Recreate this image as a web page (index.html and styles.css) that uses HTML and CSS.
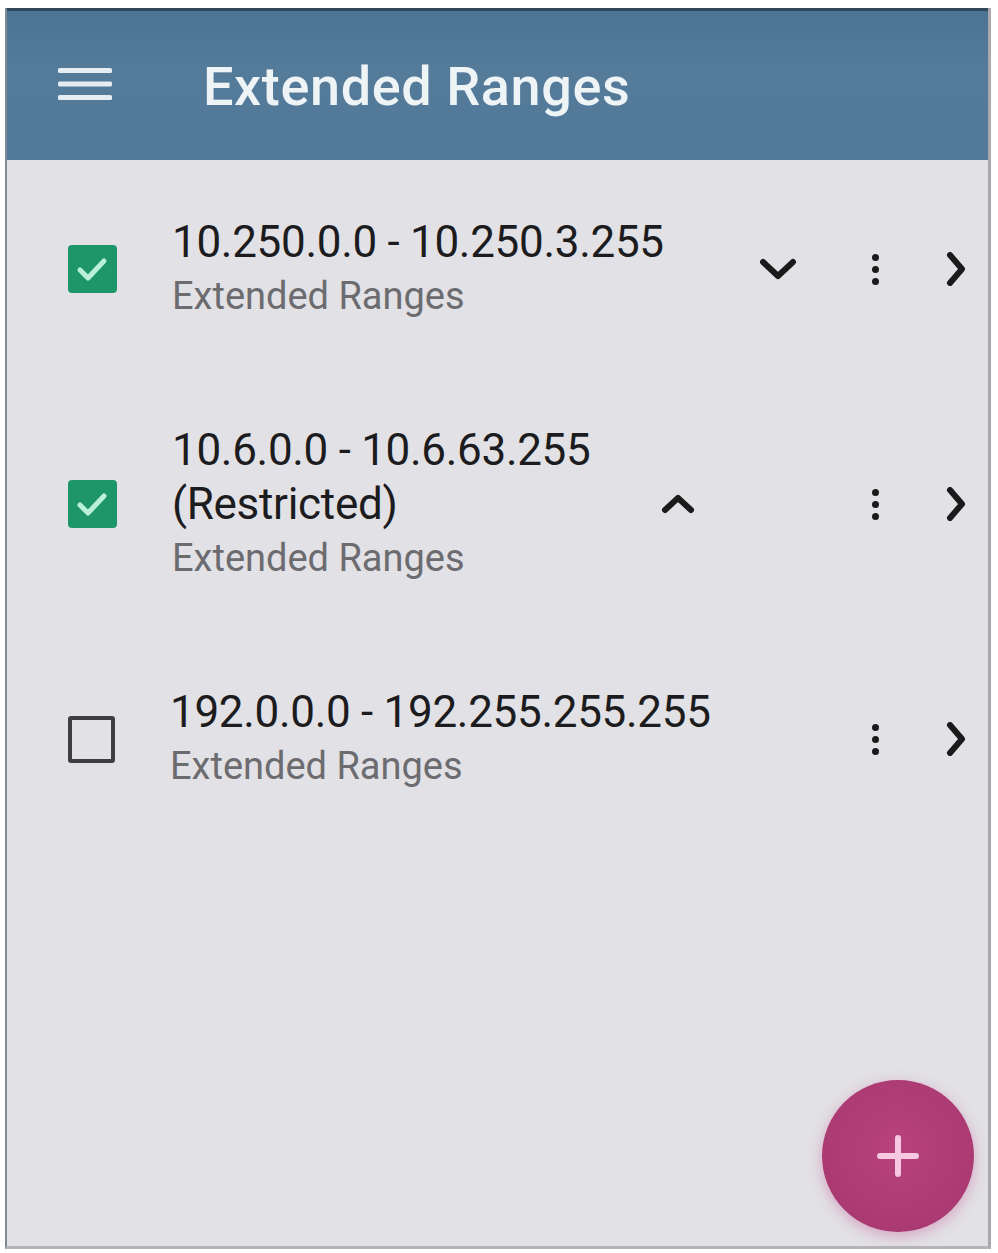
FILE: index.html
```html
<!DOCTYPE html>
<html>
<head>
<meta charset="utf-8">
<link rel="stylesheet" href="styles.css">
</head>
<body>
<div class="frame">
  <header class="appbar">
    <svg class="menu" width="54" height="36" viewBox="0 0 54 36">
      <rect x="0" y="2" width="54" height="5" rx="1.5"/>
      <rect x="0" y="15.5" width="54" height="5" rx="1.5"/>
      <rect x="0" y="29" width="54" height="5" rx="1.5"/>
    </svg>
    <h1 class="title">Extended Ranges</h1>
  </header>
  <main class="list">
    <div class="row">
      <span class="check on">
        <svg width="48" height="48" viewBox="0 0 48 48"><path d="M12 25 L20 33 L36 16"/></svg>
      </span>
      <div class="text">
        <span class="primary">10.250.0.0 - 10.250.3.255</span>
        <span class="secondary">Extended Ranges</span>
      </div>
      <span class="expand down">
        <svg width="38" height="22" viewBox="0 0 38 22"><path d="M4 4 L19 18 L34 4"/></svg>
      </span>
      <div class="actions">
        <span class="kebab"><i></i><i></i><i></i></span>
        <span class="next"><svg width="22" height="34" viewBox="0 0 22 34"><path d="M5 3 L17 17 L5 31"/></svg></span>
      </div>
    </div>
    <div class="row">
      <span class="check on">
        <svg width="48" height="48" viewBox="0 0 48 48"><path d="M12 25 L20 33 L36 16"/></svg>
      </span>
      <div class="text">
        <span class="primary">10.6.0.0 - 10.6.63.255</span>
        <span class="primary">(Restricted)</span>
        <span class="secondary">Extended Ranges</span>
      </div>
      <span class="expand up">
        <svg width="36" height="22" viewBox="0 0 36 22"><path d="M5 17 L18 5 L31 17"/></svg>
      </span>
      <div class="actions">
        <span class="kebab"><i></i><i></i><i></i></span>
        <span class="next"><svg width="22" height="34" viewBox="0 0 22 34"><path d="M5 3 L17 17 L5 31"/></svg></span>
      </div>
    </div>
    <div class="row">
      <span class="check off"></span>
      <div class="text">
        <span class="primary">192.0.0.0 - 192.255.255.255</span>
        <span class="secondary">Extended Ranges</span>
      </div>
      <div class="actions">
        <span class="kebab"><i></i><i></i><i></i></span>
        <span class="next"><svg width="22" height="34" viewBox="0 0 22 34"><path d="M5 3 L17 17 L5 31"/></svg></span>
      </div>
    </div>
    <button class="fab" aria-label="Add">
      <svg width="44" height="44" viewBox="0 0 44 44"><path d="M22 4 V40 M4 22 H40"/></svg>
    </button>
  </main>
</div>
</body>
</html>
```
FILE: styles.css
```css
html, body {
  margin: 0;
  padding: 0;
  background: #ffffff;
}
body {
  font-family: Roboto, "Liberation Sans", sans-serif;
}
.frame {
  margin: 8px 0 0 5px;
  width: 986px;
  height: 1241px;
  display: flex;
  flex-direction: column;
  border-right: 3px solid #a9a8ad;
  border-bottom: 3px solid #b5b4b9;
  border-left: 2px solid #7f8a93;
  box-sizing: border-box;
}
.appbar {
  height: 152px;
  flex: none;
  background: linear-gradient(#4d7393, #557b9a 40%, #52789a);
  border-top: 3px solid #2d4658;
  box-sizing: border-box;
  display: flex;
  align-items: center;
  padding-left: 51px;
}
.menu {
  fill: #e6edf2;
  flex: none;
  margin-top: -4px;
}
.title {
  margin: 0 0 0 91px;
  font-size: 54px;
  font-weight: 500;
  color: #eef3f6;
  letter-spacing: 0.6px;
  margin-top: 2px;
}
.list {
  flex: 1;
  background: #e2e1e5;
  padding-top: 5px;
  position: relative;
}
.row {
  display: flex;
  align-items: center;
  padding: 50px 0;
  padding-left: 61px;
}
.check {
  width: 49px;
  height: 48px;
  flex: none;
  border-radius: 4px;
  box-sizing: border-box;
  margin-right: 55px;
}
.check.on {
  background: #1f9669;
}
.check.on svg {
  display: block;
}
.check.on path {
  fill: none;
  stroke: #b9f0d9;
  stroke-width: 5;
  stroke-linecap: round;
  stroke-linejoin: round;
}
.check.off {
  width: 47px;
  height: 47px;
  border: 4px solid #3e3e40;
  border-radius: 3px;
}
.text {
  display: flex;
  flex-direction: column;
  flex: none;
}
.primary {
  font-size: 44px;
  line-height: 54px;
  color: #1c1c1e;
  letter-spacing: -0.3px;
}
.secondary {
  font-size: 38px;
  line-height: 54px;
  color: #6c6c70;
}
.expand {
  flex: none;
  display: flex;
}
.expand path, .next path {
  fill: none;
  stroke: #1a1a1a;
  stroke-width: 6;
  stroke-linecap: round;
  stroke-linejoin: round;
}
.expand.down {
  margin-left: 95px;
}
.expand.up {
  margin-left: 70px;
}
.actions {
  margin-left: auto;
  display: flex;
  align-items: center;
  gap: 33px;
  padding-right: 8px;
}
.kebab {
  width: 48px;
  height: 48px;
  display: flex;
  flex-direction: column;
  align-items: center;
  justify-content: center;
  gap: 5px;
}
.kebab i {
  width: 7px;
  height: 7px;
  border-radius: 50%;
  background: #1a1a1a;
}
.next {
  width: 48px;
  height: 48px;
  display: flex;
  align-items: center;
  justify-content: center;
}
.fab {
  position: absolute;
  right: 14px;
  bottom: 14px;
  width: 152px;
  height: 152px;
  border-radius: 50%;
  border: none;
  background: radial-gradient(circle at 50% 45%, #b8427c, #ab3a73 70%, #a23570);
  box-shadow: 0 4px 14px rgba(200, 90, 150, 0.45);
  display: flex;
  align-items: center;
  justify-content: center;
  padding: 0;
}
.fab path {
  stroke: #f6c8e2;
  stroke-width: 6;
  stroke-linecap: round;
}
```
